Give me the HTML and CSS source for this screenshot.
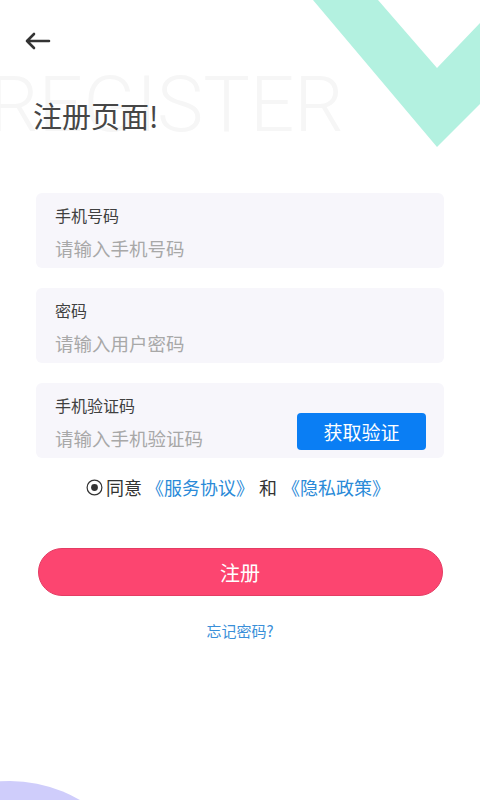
FILE: index.html
```html
<!DOCTYPE html>
<html>

<head>
    <title>注册页面</title>
    <meta name="viewport" content="width=device-width, initial-scale=1.0">
    <link rel="stylesheet" href="styles.css">
</head>

<body>
    <div class="page">
        <!-- decorations -->
        <svg class="deco-v" width="167" height="147" viewBox="313 0 167 147">
            <polygon points="313,0 378,0 437,68 480,23 480,104 437,147" fill="#b3f1e0" />
        </svg>
        <div class="deco-circle"></div>

        <div class="topbar">
            <svg class="back" width="28" height="28" viewBox="0 0 28 28">
                <path d="M4 14 H26 M11 7 L4 14 L11 21" fill="none" stroke="#333" stroke-width="2.6"
                    stroke-linecap="round" stroke-linejoin="round" />
            </svg>
        </div>

        <div class="hero">
            <div class="watermark">REGISTER</div>
            <h1 class="title">注册页面!</h1>
        </div>

        <form class="form" onsubmit="return false;">
            <div class="field">
                <label class="field-label" for="phone">手机号码</label>
                <input class="field-input" type="text" id="phone" placeholder="请输入手机号码">
            </div>

            <div class="field">
                <label class="field-label" for="pwd">密码</label>
                <input class="field-input" type="password" id="pwd" placeholder="请输入用户密码">
            </div>

            <div class="field field-code">
                <div class="field-main">
                    <label class="field-label" for="code">手机验证码</label>
                    <input class="field-input" type="text" id="code" placeholder="请输入手机验证码">
                </div>
                <button type="button" class="code-btn">获取验证</button>
            </div>

            <div class="agree">
                <svg class="radio" width="17" height="17" viewBox="0 0 17 17">
                    <circle cx="8.5" cy="8.5" r="7.4" fill="none" stroke="#333" stroke-width="1.2" />
                    <circle cx="8.5" cy="8.5" r="3.4" fill="#333" />
                </svg>
                <span class="agree-text">同意</span>
                <a class="link link-first">《服务协议》</a>
                <span class="agree-text and">和</span>
                <a class="link">《隐私政策》</a>
            </div>

            <button type="submit" class="submit-btn">注册</button>

            <a class="forgot">忘记密码?</a>
        </form>
    </div>
</body>

</html>
```

FILE: styles.css
```css
body {
    margin: 0;
    padding: 0;
    background-color: #fff;
    font-family: "Noto Sans CJK SC", "Noto Sans", sans-serif;
}

.page {
    position: relative;
    width: 480px;
    height: 800px;
    overflow: hidden;
    background-color: #fff;
}

.deco-v {
    position: absolute;
    top: 0;
    right: 0;
}

.deco-circle {
    position: absolute;
    left: -128px;
    top: 781px;
    width: 276px;
    height: 276px;
    border-radius: 50%;
    background-color: #cfcdfb;
}

.topbar {
    position: relative;
    padding: 27px 0 0 23px;
    height: 28px;
}

.back {
    display: block;
}

.hero {
    position: relative;
    height: 76px;
    margin-top: 42px;
}

.watermark {
    position: absolute;
    left: -11px;
    top: -39px;
    font-family: Roboto, "Noto Sans", sans-serif;
    font-weight: 300;
    font-size: 78px;
    line-height: 94px;
    color: #f6f6f6;
    white-space: nowrap;
}

.title {
    position: relative;
    margin: 0;
    padding: 0 0 0 33px;
    font-size: 29px;
    line-height: 36px;
    font-weight: normal;
    color: #464646;
}

.form {
    display: flex;
    flex-direction: column;
    align-items: center;
    margin-top: 20px;
}

.field {
    box-sizing: border-box;
    width: 408px;
    height: 75px;
    margin-bottom: 20px;
    padding: 11px 18px 8px 19px;
    background-color: #f7f6fb;
    border-radius: 6px;
    display: flex;
    flex-direction: column;
}

.field-label {
    font-size: 16px;
    line-height: 22px;
    color: #404040;
}

.field-input {
    margin-top: 10px;
    padding: 0;
    border: none;
    outline: none;
    background: transparent;
    font-family: "Noto Sans CJK SC", "Noto Sans", sans-serif;
    font-size: 18.5px;
    line-height: 24px;
    height: 24px;
    color: #333;
}

.field-input::placeholder {
    color: #a8a8a8;
}

.field-code {
    flex-direction: row;
    align-items: flex-end;
    margin-bottom: 0;
}

.field-main {
    display: flex;
    flex-direction: column;
    flex: 1;
    min-width: 0;
}

.code-btn {
    width: 129px;
    height: 37px;
    border: none;
    border-radius: 4px;
    background-color: #0a7ef4;
    color: #fff;
    font-family: "Noto Sans CJK SC", "Noto Sans", sans-serif;
    font-size: 19px;
    padding: 0;
}

.agree {
    display: flex;
    align-items: center;
    margin-top: 17px;
    margin-left: -4px;
    font-size: 18px;
    line-height: 24px;
}

.radio {
    margin-right: 3px;
}

.agree-text {
    color: #333;
}

.link {
    color: #2a8ad8;
}

.link-first {
    margin-left: 4px;
}

.and {
    margin: 0 5px 0 5px;
}

.submit-btn {
    margin-top: 49px;
    width: 405px;
    height: 48px;
    border: 1px solid #e43c63;
    border-radius: 24px;
    background-color: #fc4570;
    color: #fff;
    font-family: "Noto Sans CJK SC", "Noto Sans", sans-serif;
    font-size: 20px;
    padding: 0;
}

.forgot {
    margin-top: 25px;
    font-size: 15px;
    line-height: 20px;
    color: #3a8fd8;
}
```
